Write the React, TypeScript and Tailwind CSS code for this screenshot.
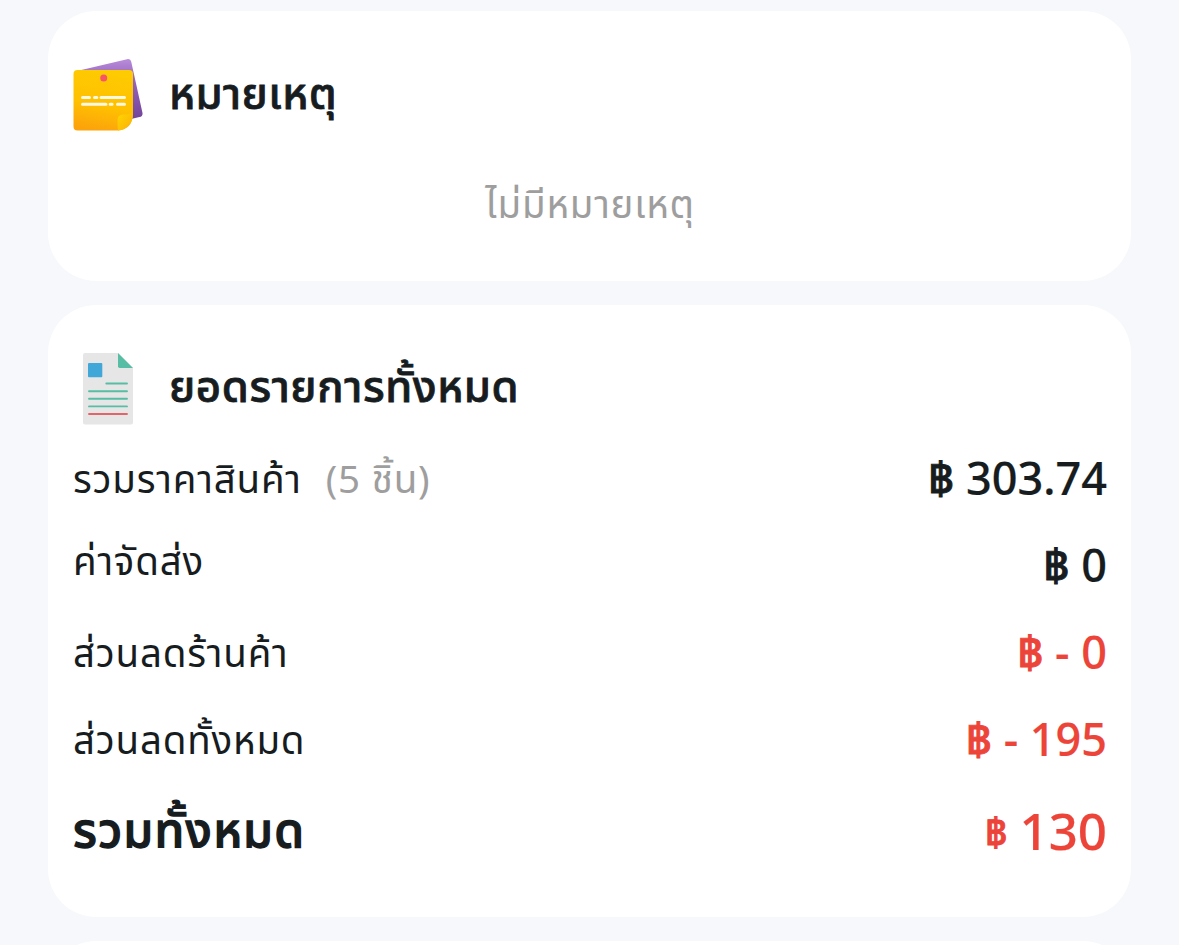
import React from 'react';

interface SummaryRow {
  label: string;
  note?: string;
  amount: string;
  discount?: boolean;
  raised?: boolean;
}

const rows: SummaryRow[] = [
  { label: 'รวมราคาสินค้า', note: '(5 ชิ้น)', amount: '303.74' },
  { label: 'ค่าจัดส่ง', amount: '0', raised: true },
  { label: 'ส่วนลดร้านค้า', amount: '- 0', discount: true },
  { label: 'ส่วนลดทั้งหมด', amount: '- 195', discount: true },
];

function NotesIcon() {
  return (
    <svg viewBox="0 0 72 72" className="h-[72px] w-[72px] shrink-0">
      <defs>
        <linearGradient id="backSheet" x1="0" y1="0" x2="0" y2="1">
          <stop offset="0" stopColor="#b98cdb" />
          <stop offset="0.3" stopColor="#9a68bd" />
          <stop offset="1" stopColor="#71449a" />
        </linearGradient>
        <linearGradient id="frontSheet" x1="0.6" y1="0" x2="0.4" y2="1">
          <stop offset="0" stopColor="#fecb02" />
          <stop offset="0.6" stopColor="#ffc000" />
          <stop offset="1" stopColor="#fca30b" />
        </linearGradient>
        <linearGradient id="fold" x1="0" y1="0" x2="1" y2="1">
          <stop offset="0" stopColor="#ffd800" />
          <stop offset="1" stopColor="#fbae08" />
        </linearGradient>
      </defs>
      <path d="M4 12 L54 0.2 Q57.5 -0.4 58.3 3 L69.5 54 Q69.9 57.4 66.5 58 L58 60 Z" fill="url(#backSheet)" />
      <path d="M4.5 11 H56 Q60 11 60 15 V55.5 Q59 70 45 71.5 H4.5 Q0.5 71.5 0.5 67.5 V15 Q0.5 11 4.5 11 Z" fill="url(#frontSheet)" />
      <path d="M45 71.5 Q44.2 66 44.6 60.5 Q44.8 55.6 49.5 55.4 Q56.5 56.3 60 52.5 V55.5 Q59 70 45 71.5 Z" fill="url(#fold)" />
      <circle cx="30.7" cy="19" r="3.5" fill="#f75468" />
      <path d="M9.5 38.4 H16.5 M21.5 38.4 H23.9 M28 38.4 H51.5" stroke="#fff8e5" strokeWidth="3" strokeLinecap="round" />
      <path d="M9.5 45.2 H33 M37.1 45.2 H39.1 M44.5 45.2 H51.5" stroke="#fff8e5" strokeWidth="3" strokeLinecap="round" />
    </svg>
  );
}

function DocumentIcon() {
  return (
    <svg viewBox="0 0 72 72" className="h-[72px] w-[72px] shrink-0">
      <path d="M12 0 H45 L60 15 V69.5 Q60 71.5 58 71.5 H12 Q10 71.5 10 69.5 V2 Q10 0 12 0 Z" fill="#e6e6e6" />
      <path d="M45 0 L60 15 H46.7 Q45 15 45 13.3 Z" fill="#57bda4" />
      <rect x="15" y="10" width="14.3" height="14.3" rx="1" fill="#41a6d8" />
      <path d="M33.3 30.5 H54 M16 38.2 H54 M16 45.8 H54 M16 53.4 H54" stroke="#57bda4" strokeWidth="1.9" strokeLinecap="round" />
      <path d="M16 61 H54" stroke="#e2646a" strokeWidth="1.9" strokeLinecap="round" />
    </svg>
  );
}

export default function App() {
  return (
    <main className="flex h-[945px] flex-col gap-6 overflow-hidden bg-[#f7f8fb] px-12 pt-[11px] font-['Noto_Sans','Noto_Sans_Thai',sans-serif] text-[#171c1f]">

      {/* Notes */}
      <section className="h-[270px] w-[1083px] shrink-0 rounded-[48px] bg-white pt-12 pr-6 pl-[25px]">
        <div className="flex h-[72px] items-center gap-6">
          <NotesIcon />
          <h2 className="pb-[7px] text-[43.5px] leading-[64px] font-medium tracking-[0.5px] [-webkit-text-stroke:0.8px]">หมายเหตุ</h2>
        </div>
        <p className="mt-9 text-center text-[38.5px] leading-[73px] tracking-[0.75px] text-[#9e9e9e]">ไม่มีหมายเหตุ</p>
      </section>

      {/* Order summary */}
      <section className="h-[612px] w-[1083px] shrink-0 rounded-[48px] bg-white pt-[47px] pr-6 pl-[25px]">
        <div className="flex h-[73px] items-center gap-6">
          <DocumentIcon />
          <h2 className="pb-[7px] text-[43.5px] leading-[64px] font-medium tracking-[0.65px] [-webkit-text-stroke:0.8px]">ยอดรายการทั้งหมด</h2>
        </div>

        <div className="mt-[10px]">
          {rows.map((row) => (
            <div key={row.label} className="flex h-[87px] items-center justify-between whitespace-nowrap">
              <div className={`flex gap-6 text-[38.5px] leading-[60px] tracking-[0.8px] ${row.raised ? 'pb-[11px]' : 'pb-[2px]'}`}>
                <span>{row.label}</span>
                {row.note && <span className="text-[#9e9e9e]">{row.note}</span>}
              </div>
              <div className={`pb-px text-[45px] leading-[60px] font-medium [-webkit-text-stroke:0.2px] ${row.discount ? 'text-[#ec4439]' : ''}`}>
                <span className="[-webkit-text-stroke:0.9px]">฿</span> {row.amount}
              </div>
            </div>
          ))}

          {/* Grand total */}
          <div className="flex h-[92px] items-center justify-between whitespace-nowrap">
            <span className="text-[48px] leading-[60px] font-medium tracking-[1.3px] [-webkit-text-stroke:1.3px]">รวมทั้งหมด</span>
            <span className="flex items-center gap-3 pt-px leading-[60px] font-medium text-[#ec4439]">
              <span className="pt-0.5 text-[38.5px] [-webkit-text-stroke:0.9px]">฿</span>
              <span className="text-[51px] [-webkit-text-stroke:0.2px]">130</span>
            </span>
          </div>
        </div>
      </section>

      <section className="h-[200px] w-[1083px] shrink-0 rounded-[48px] bg-white" />
    </main>
  );
}
